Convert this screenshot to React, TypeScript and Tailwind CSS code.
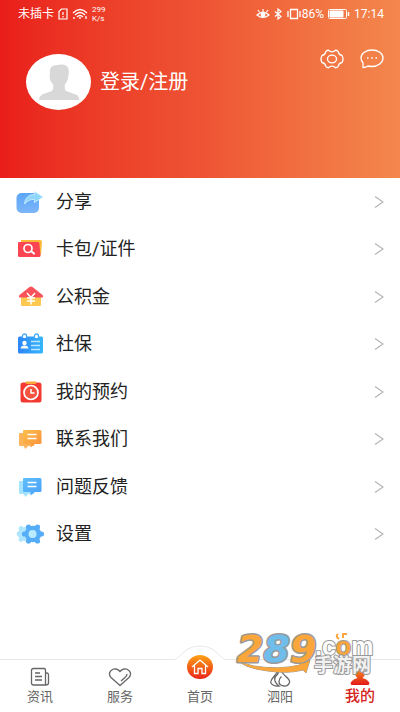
import type { ReactNode } from "react";

const menuItems: { label: string; icon: ReactNode }[] = [
  { label: "分享", icon: <ShareIcon /> },
  { label: "卡包/证件", icon: <CardsIcon /> },
  { label: "公积金", icon: <FundIcon /> },
  { label: "社保", icon: <SocialIcon /> },
  { label: "我的预约", icon: <BookingIcon /> },
  { label: "联系我们", icon: <ChatPairIcon back="#fbb45c" from="#fbc04a" to="#f98e3c" /> },
  { label: "问题反馈", icon: <ChatPairIcon back="#a5e2fc" from="#5fc0fb" to="#4a9ef8" /> },
  { label: "设置", icon: <GearIcon /> },
];

function ShareIcon() {
  return (
    <svg viewBox="0 0 28 24" className="h-6 w-7">
      <defs>
        <linearGradient id="share" x1="0" y1="0" x2="0" y2="1">
          <stop offset="0" stopColor="#5aa5f6" />
          <stop offset="1" stopColor="#7db6fa" />
        </linearGradient>
      </defs>
      <rect x="0.5" y="3" width="22.5" height="20" rx="5" fill="url(#share)" />
      <path d="M8.500 14C9 8 12.500 4.500 18.500 4.500V1.500L27 7 18.500 12.500V9.500C14.500 9.300 11.500 10.500 8.500 14Z" fill="#8fd6fb" stroke="#d5f1ff" strokeWidth="0.8" />
    </svg>
  );
}

function CardsIcon() {
  return (
    <svg viewBox="0 0 28 24" className="h-6 w-7">
      <path d="M5 3H24Q26 3 26 5L25 18H5Z" fill="#fdbb38" />
      <path d="M2 6Q2 5 3 5H22Q23 5 23.300 6L24.500 18.500Q24.500 20 23 20H3.500Q2 20 2 18.500Z" fill="#fb4552" />
      <circle cx="12" cy="11.500" r="4" fill="none" stroke="#fff" strokeWidth="1.700" />
      <path d="M15.500 14.500 18 16.500" stroke="#fff" strokeWidth="2.200" strokeLinecap="round" />
    </svg>
  );
}

function FundIcon() {
  return (
    <svg viewBox="0 0 28 24" className="h-6 w-7">
      <path d="M5 10H25V20Q25 21 24 21H6Q5 21 5 20Z" fill="#fdc84f" />
      <path d="M13.500 2Q15 1 16.500 2L26.500 10Q28 12.500 26 12.500H4Q2 12.500 3.500 10Z" fill="#f9525a" />
      <path d="M11 8 15 12.500 19 8M15 12.500V19.500M11 13H19M11 16H19" fill="none" stroke="#fff" strokeWidth="1.500" />
    </svg>
  );
}

function SocialIcon() {
  return (
    <svg viewBox="0 0 28 24" className="h-6 w-7">
      <defs>
        <linearGradient id="social">
          <stop offset="0" stopColor="#2f86f7" />
          <stop offset="1" stopColor="#35b6fb" />
        </linearGradient>
      </defs>
      <rect x="2" y="4.500" width="25" height="17" rx="1.500" fill="url(#social)" />
      <path d="M6.500 6V4A2 2 0 0 1 10.500 4V6M18.500 6V4A2 2 0 0 1 22.500 4V6" fill="#fff" stroke="#43a9fb" strokeWidth="1.300" />
      <circle cx="8.500" cy="11" r="2.200" fill="#fff" />
      <path d="M4.500 16.500Q5 13.500 8.500 13.500T12.500 16.500Z" fill="#fff" />
      <path d="M15 9.500H24M15 13.500H24M15 17.500H24" stroke="#b9e6ff" strokeWidth="1.500" />
    </svg>
  );
}

function BookingIcon() {
  return (
    <svg viewBox="0 0 28 24" className="h-6 w-7">
      <rect x="4.500" y="2.500" width="21" height="20" rx="2.500" fill="#f23a32" />
      <path d="M10 1.500H20V4H10Z" fill="#fda63a" />
      <circle cx="15" cy="12.500" r="7" fill="#f4543f" stroke="#fff" strokeWidth="1.700" />
      <path d="M15 9V13H18.500" fill="none" stroke="#fff" strokeWidth="1.500" />
    </svg>
  );
}

function ChatPairIcon({ back, from, to }: { back: string; from: string; to: string }) {
  const id = "chat" + to.slice(1);
  return (
    <svg viewBox="0 0 28 24" className="h-6 w-7">
      <defs>
        <linearGradient id={id} x1="0" y1="0" x2="1" y2="1">
          <stop offset="0" stopColor={from} />
          <stop offset="1" stopColor={to} />
        </linearGradient>
      </defs>
      <path d="M4 6H18V19H12L9.500 22 7.500 19H4Q3 19 3 18V7Q3 6 4 6Z" fill={back} />
      <path d="M8 3H24Q25.500 3 25.500 4.500V15.500Q25.500 17 24 17H19L14.500 20.500V17H8Q7 17 7 16V4Q7 3 8 3Z" fill={"url(#" + id + ")"} />
      <path d="M11.500 7.500H20.500M11.500 11.500H20.500" stroke="#fff" strokeWidth="1.700" />
    </svg>
  );
}

function GearIcon() {
  return (
    <svg viewBox="0 0 28 24" className="h-6 w-7">
      <g fill="#b0e6fd">
        <circle cx="9" cy="12" r="7" />
        <circle cx="3" cy="12" r="2.400" />
        <circle cx="5" cy="6.500" r="2.400" />
        <circle cx="5" cy="17.500" r="2.400" />
      </g>
      <g fill="#55adf7">
        <circle cx="17" cy="12" r="8.300" />
        <circle cx="25.500" cy="12" r="2.600" />
        <circle cx="8.500" cy="12" r="2.600" />
        <circle cx="12.500" cy="5" r="2.600" />
        <circle cx="21.500" cy="5" r="2.600" />
        <circle cx="12.500" cy="19" r="2.600" />
        <circle cx="21.500" cy="19" r="2.600" />
      </g>
      <circle cx="16.500" cy="12" r="4" fill="#b9ecff" />
    </svg>
  );
}

function StatusBar() {
  return (
    <div className="flex h-7 items-center justify-between pr-4 pl-[18px] text-xs">
      <div className="flex items-center gap-1">
        <span>未插卡</span>
        <svg viewBox="0 0 10 12" className="h-3 w-2.5" fill="none" stroke="currentColor" strokeWidth="1.200">
          <path d="M3.500 1H9V11H1V3.500ZM5 4V7M5 8V9.500" />
        </svg>
        <svg viewBox="0 0 16 12" className="h-3 w-4" fill="none" stroke="currentColor" strokeWidth="1.300">
          <path d="M1 5Q8-2 15 5M3 7Q8 2 13 7M5 9Q8 6 11 9M2 9V11M14 8V11M8 9V11" />
        </svg>
        <span className="text-[8px] leading-[9px]">
          299
          <br />
          K/s
        </span>
      </div>
      <div className="flex items-center gap-1">
        <svg viewBox="0 0 14 12" className="h-3 w-3.5" fill="none" stroke="currentColor" strokeWidth="1.200">
          <path d="M1 7Q7 1.500 13 7Q7 12 1 7ZM2 2 3.500 4M7 1V3.500M12 2 10.500 4" />
          <circle cx="7" cy="7" r="1.800" fill="currentColor" />
        </svg>
        <svg viewBox="0 0 8 12" className="h-3 w-2" fill="none" stroke="currentColor" strokeWidth="1.200">
          <path d="M1 3.500 7 8.500 4 11V1L7 3.500 1 8.500" />
        </svg>
        <span className="flex items-center">
          <svg viewBox="0 0 16 12" className="h-3 w-4" fill="none" stroke="currentColor" strokeWidth="1.300">
            <path d="M4.500 1.500H11.500V10.500H4.500ZM2 3V9M14 3V9" />
          </svg>
          86%
        </span>
        <svg viewBox="0 0 22 10" className="h-2.5 w-[22px]" fill="none" stroke="currentColor">
          <rect x="0.5" y="0.5" width="18" height="9" rx="1" />
          <path d="M2 2H15V8H2Z" fill="currentColor" />
          <path d="M20.500 3V7" strokeWidth="1.500" />
        </svg>
        <span>17:14</span>
      </div>
    </div>
  );
}

function Header() {
  return (
    <header className="h-[178px] bg-linear-to-r from-[#e91c1a] via-[#ee5334] to-[#f3874c] text-white">
      <StatusBar />
      <div className="flex items-start justify-between pr-4 pl-[26px]">
        <a href="#login" className="mt-[26px] flex items-center gap-[9px] text-xl">
          <svg viewBox="0 0 65 56" className="h-14 w-[65px]">
            <ellipse cx="32.500" cy="28" rx="32.500" ry="28" fill="#fff" />
            <path d="M24 19Q23 11 31 11Q41 9 42.500 15Q43.500 19 42 24Q41 29 39 30Q38 35 40 37L51 41Q53 43 53.500 46H13Q13.500 42 16 40.500L26 37Q28 34 27 30Q24 28 23.500 23Z" fill="#d8d8d8" />
          </svg>
          登录/注册
        </a>
        <div className="mt-5 flex items-center gap-4">
          <button aria-label="设置">
            <svg viewBox="0 0 24 22" className="h-[22px] w-6" fill="none" stroke="currentColor" strokeWidth="1.300" strokeLinejoin="round">
              <path d="M8.500 2.200Q10 3.800 12 3.800T15.500 2.200Q18.500 2.500 18.800 5.500Q20 7 22 7.500Q24 11 22 14.500Q20 15 18.800 16.500Q18.500 19.500 15.500 19.800Q14 18.200 12 18.200T8.500 19.800Q5.500 19.500 5.200 16.500Q4 15 2 14.500Q0 11 2 7.500Q4 7 5.200 5.500Q5.500 2.500 8.500 2.200Z" />
              <ellipse cx="12" cy="11" rx="4.500" ry="3.800" />
            </svg>
          </button>
          <button aria-label="消息">
            <svg viewBox="0 0 24 22" className="h-[22px] w-6" fill="none" stroke="currentColor" strokeWidth="1.300">
              <path d="M3 19.500V15Q1 12.500 1 10C1 5.500 6 2 12 2S23 5.500 23 10S18 18.500 12 18.500Q10 18.500 8 18Q6 19.500 3 19.500Z" strokeLinejoin="round" />
              <path d="M7 10H8.500M11.300 10H12.800M15.500 10H17" strokeWidth="1.500" />
            </svg>
          </button>
        </div>
      </div>
    </header>
  );
}

function TabBar() {
  return (
    <nav className="relative grid h-[53px] grid-cols-5 border-t border-[#e8e8e8] bg-white text-[13px] text-[#666]">
      <a href="#news" className="flex flex-col items-center justify-end pb-1.5">
        <svg viewBox="0 0 20 20" className="h-5 w-5" fill="none" stroke="currentColor" strokeWidth="1.300">
          <path d="M3.500 1.500H14Q15.500 1.500 15.500 3V18H3.500Q1.500 18 1.500 16V3.500Q1.500 1.500 3.500 1.500ZM15.500 6H17Q18.500 6 18.500 8V16Q18.500 18 15.500 18M5 6H10M5 9.500H12M5 13H12" />
        </svg>
        资讯
      </a>
      <a href="#service" className="flex flex-col items-center justify-end pb-1.5">
        <svg viewBox="0 0 24 20" className="h-5 w-6" fill="none" stroke="currentColor" strokeWidth="1.300">
          <path d="M12 18.500 3 10.500C-1 6 4 1 8 2Q10.500 2.500 12 4.500Q13.500 2.500 16 2C20 1 25 6 21 10.500ZM19 7Q19 9 17 10.500L13 14" strokeLinejoin="round" />
        </svg>
        服务
      </a>
      <a href="#home" className="relative flex flex-col items-center justify-end pb-1.5">
        <svg viewBox="0 0 56 44" className="absolute -top-[15px] h-11 w-14">
          <defs>
            <linearGradient id="home" x1="0" y1="0" x2="0" y2="1">
              <stop offset="0" stopColor="#fca313" />
              <stop offset="1" stopColor="#ec2319" />
            </linearGradient>
          </defs>
          <path d="M2 15C8 14 12 1 28 1S48 14 54 15V44H2Z" fill="#fff" />
          <path d="M2 14.500C8 14 12 1 28 1S48 14 54 14.500" fill="none" stroke="#e8e8e8" />
          <ellipse cx="28" cy="22" rx="13" ry="12" fill="url(#home)" />
          <path d="M20 22 28 15 36 22M22.500 20.500V28.500H26V23.500H30V28.500H33.500V20.500" fill="none" stroke="#fff" strokeWidth="1.300" />
        </svg>
        首页
      </a>
      <a href="#siyang" className="flex flex-col items-center justify-end pb-1.5">
        <svg viewBox="0 0 22 20" className="h-5 w-[22px]" fill="none" stroke="currentColor" strokeWidth="1.300">
          <path d="M9 2.500Q10 6 8 8Q5 10 6 14Q7 17 10 19Q4 19.500 2 16C0 12 8 9 9 2.500ZM12 2.500C13 9 22 11 20.500 15.500Q19 19.500 15 19Q10 18.500 10 14.500Q10 11.500 12.500 9.500" />
        </svg>
        泗阳
      </a>
      <a href="#mine" aria-current="page" className="flex flex-col items-center justify-end pb-1.5 text-[15px] leading-5 font-medium text-[#d42420]">
        <svg viewBox="0 0 20 18" className="h-[18px] w-5">
          <defs>
            <linearGradient id="mine" x1="0" y1="0" x2="0" y2="1">
              <stop offset="0" stopColor="#f9971e" />
              <stop offset="1" stopColor="#e3191b" />
            </linearGradient>
          </defs>
          <path d="M10 0Q15 0 15 5Q15 8 12.500 10Q17 11 19 14Q20 17 18 17H2Q0 17 1 14Q3 11 7.500 10Q5 8 5 5Q5 0 10 0Z" fill="url(#mine)" />
        </svg>
        我的
      </a>
    </nav>
  );
}

function Watermark() {
  return (
    <svg viewBox="0 0 150 60" className="pointer-events-none absolute right-4 bottom-7 h-[60px] w-[150px]" fontWeight="bold" stroke="#999" paintOrder="stroke" strokeLinejoin="round">
      <path d="M2 34Q6 39 20 42Q44 46 66 41L63 37 76 36 72 49 69 46Q54 50 34 47Q8 44 2 34Z" fill="#fba63b" strokeWidth="1" />
      <text x="3" y="38" fontFamily="DejaVu Sans" fontSize="38" fontStyle="italic" fill="#fba63b" strokeWidth="3">
        2<tspan fill="#6fbdea">8</tspan>9
      </text>
      <text x="81" y="31" fontFamily="Liberation Sans" fontSize="25" fill="#fff" strokeWidth="2">
        .c<tspan fill="#fba63b">o</tspan>m
      </text>
      <path d="M105 15Q101 12 104 10M109 14V10H113" fill="none" stroke="#fba63b" strokeWidth="2" />
      <text x="80" y="48" fontFamily="Noto Sans CJK SC" fontSize="19" fill="#f2f2f2" strokeWidth="2">
        手游网
      </text>
    </svg>
  );
}

export default function App() {
  return (
    <div className="relative flex min-h-screen flex-col bg-white font-['Roboto','Noto_Sans_CJK_SC',sans-serif] text-[#222]">
      <Header />
      <main className="grow">
        <ul className="grid h-[380px] grid-rows-8">
          {menuItems.map((item) => (
            <li key={item.label}>
              <a href="#menu" className="flex h-full items-center px-4 text-lg">
                {item.icon}
                <span className="ml-3 grow">{item.label}</span>
                <svg viewBox="0 0 10 14" className="h-3.5 w-2.5" fill="none" stroke="#b5b5b5" strokeWidth="1.300">
                  <path d="M1 1.500 9 7 1 12.500" />
                </svg>
              </a>
            </li>
          ))}
        </ul>
      </main>
      <TabBar />
      <Watermark />
    </div>
  );
}
